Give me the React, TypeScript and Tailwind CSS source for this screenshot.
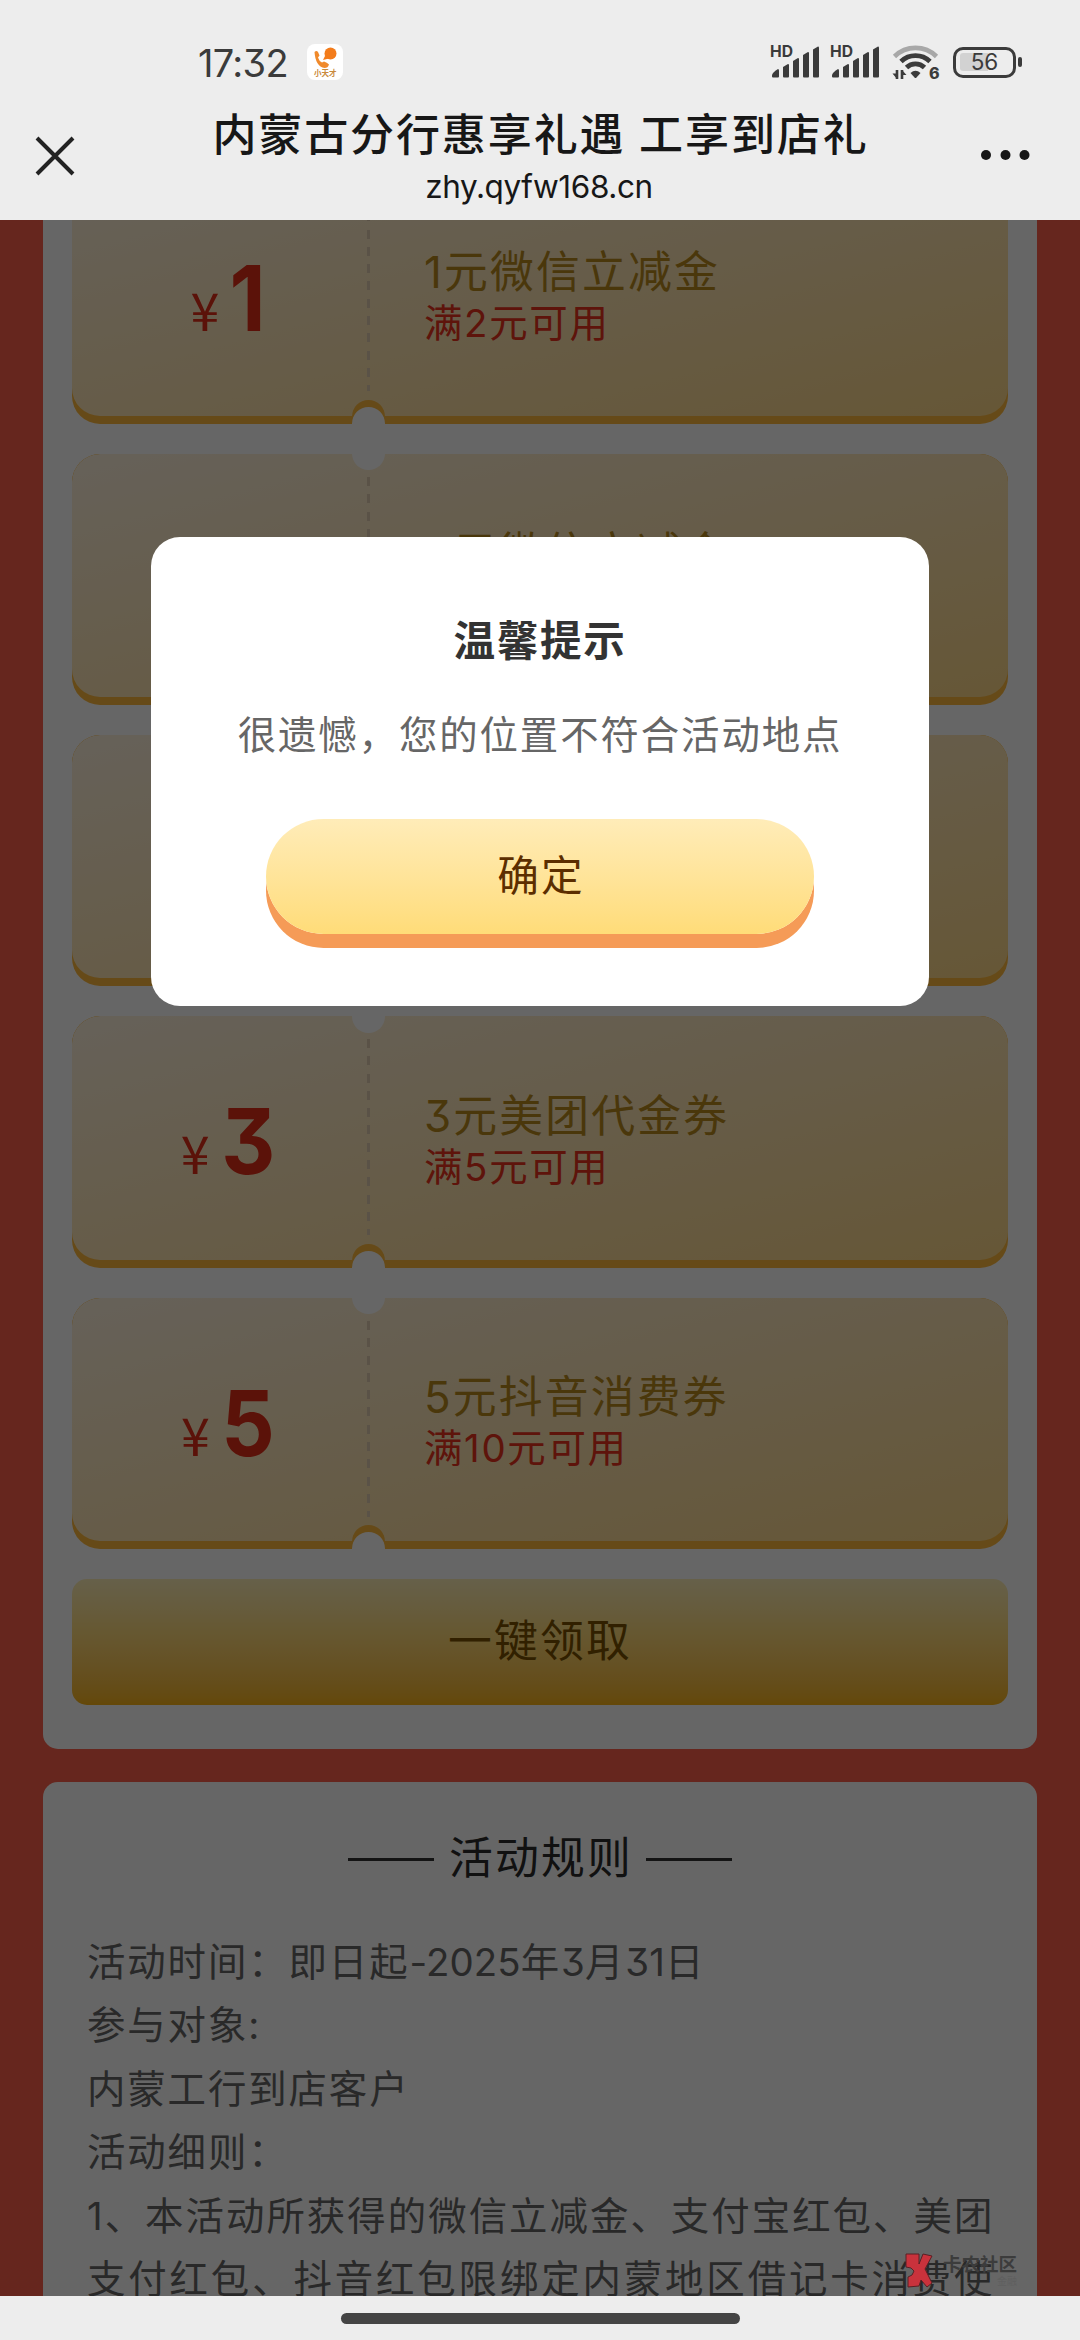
interface Coupon {
  amount: string;
  title: string;
  condition: string;
}

const coupons: Coupon[] = [
  { amount: "1", title: "1元微信立减金", condition: "满2元可用" },
  { amount: "2", title: "2元微信立减金", condition: "满4元可用" },
  { amount: "2", title: "2元支付宝红包", condition: "满4元可用" },
  { amount: "3", title: "3元美团代金券", condition: "满5元可用" },
  { amount: "5", title: "5元抖音消费券", condition: "满10元可用" },
];

function SignalIcon() {
  return (
    <svg className="overflow-visible" width="50" height="34" viewBox="0 0 50 34" fill="#3b3b3b">
      <text x="0" y="12" fontSize="15.5" fontWeight="700" textLength="23" lengthAdjust="spacingAndGlyphs">
        HD
      </text>
      <path d="M2 30.500q0-3 6-6.500q1 0 1 1.500v6q0 1-1 1h-5q-1 0-1-1z" />
      <path d="M13 22l5-3q1 0 1 1v11.500q0 1-1 1h-4q-1 0-1-1z" />
      <path d="M23 16l5-3q1 0 1 1v17.500q0 1-1 1h-4q-1 0-1-1z" />
      <path d="M33 10l5-3q1 0 1 1v23.500q0 1-1 1h-4q-1 0-1-1z" />
      <path d="M43 4.500l5-3q1 0 1 1v29q0 1-1 1h-4q-1 0-1-1z" />
    </svg>
  );
}

function WifiIcon() {
  return (
    <svg className="overflow-visible" width="48" height="36" viewBox="0 0 48 36" fill="none">
      <path d="M2.500 12.500a30 30 0 0 1 42 0" stroke="#a8a8a8" strokeWidth="4.600" />
      <path d="M9 17.500a21 21 0 0 1 29 0" stroke="#3b3b3b" strokeWidth="4.800" />
      <path d="M14.500 23.500a13 13 0 0 1 18 0" stroke="#3b3b3b" strokeWidth="4.800" />
      <path d="M18.500 29q5-4.500 10 0l-4 4.500q-1 1-2 0z" fill="#3b3b3b" />
      <path d="M5 26v9M10 35v-9" stroke="#3b3b3b" strokeWidth="2.600" />
      <path d="M.5 29.500L5 35v-5.500zM14.500 31L10 26v5z" fill="#3b3b3b" />
      <text x="37" y="35" fontSize="16" fontWeight="800" fill="#3b3b3b">
        6
      </text>
    </svg>
  );
}

function Battery() {
  return (
    <div className="flex items-center gap-[2px]">
      <div className="relative flex h-[31px] w-[63px] items-center justify-center rounded-[10px] border-[3.500px] border-[#3b3b3b]">
        <div className="absolute left-[4px] h-[18px] w-[28px] rounded-l-[3px] bg-[#d2d2d2]" />
        <span className="relative text-[22.500px] leading-none text-[#3b3b3b]">56</span>
      </div>
      <div className="h-[10px] w-[4px] rounded-[2px] bg-[#3b3b3b]" />
    </div>
  );
}

function AppBadge() {
  return (
    <svg className="ml-[19px]" width="36" height="36" viewBox="0 0 36 36">
      <rect width="36" height="36" rx="8" fill="#fff" />
      <path
        d="M7.500 8q2-2 3.500 0l1.500 3.500-1.500 2q1 3.500 4 5l2-1q3 1 5 3-1 3.500-4.500 3.500-9-1.500-10-16z"
        fill="#f08a2c"
      />
      <circle cx="23.500" cy="9.500" r="6" fill="#f37c1b" />
      <path d="M18.500 11l-2.500 5 6-1.500z" fill="#f37c1b" />
      <text x="7" y="32" fontSize="7.500" fontWeight="700" fill="#c98a3c">
        小天才
      </text>
    </svg>
  );
}

function StatusBar() {
  return (
    <div className="flex h-[80px] items-end pl-[198px] pr-[58px]">
      <span className="text-[38px] leading-[34px] tracking-[-0.700px] text-[#3b3b3b]">17:32</span>
      <AppBadge />
      <div className="ml-auto flex items-center">
        <SignalIcon />
        <div className="w-[10px]" />
        <SignalIcon />
        <div className="w-[12px]" />
        <WifiIcon />
        <div className="w-[13px]" />
        <Battery />
      </div>
    </div>
  );
}

function TitleBar() {
  return (
    <div className="flex h-[140px] items-start justify-between pl-[35px] pr-[49px] text-[#171717]">
      <svg className="mt-[56px]" width="40" height="40" viewBox="0 0 40 40" stroke="#222" strokeWidth="4">
        <path d="M2 2l36 36M38 2L2 38" />
      </svg>
      <div className="ml-[25px] mt-[29px] flex flex-col items-center">
        <h1 className="whitespace-nowrap text-[44px] font-medium leading-[52px] tracking-[1.900px]">
          内蒙古分行惠享礼遇 工享到店礼
        </h1>
        <p className="-ml-[3px] mt-[4px] text-[31.500px] leading-[44px] tracking-[-0.400px]">zhy.qyfw168.cn</p>
      </div>
      <svg className="mt-[70px]" width="50" height="10" viewBox="0 0 50 10" fill="#171717">
        <circle cx="5" cy="5" r="5" />
        <circle cx="24.500" cy="5" r="5" />
        <circle cx="43.500" cy="5" r="5" />
      </svg>
    </div>
  );
}

function CouponCard({ amount, title, condition }: Coupon) {
  return (
    <div className="relative h-[251.300px] overflow-hidden rounded-[28px] bg-[#ffb93c]">
      <div className="flex h-[243.500px] items-center rounded-[28px] bg-linear-to-br from-[#fff3df] to-[#ffd988] pt-[8px]">
        <div className="flex w-[314px] items-baseline justify-center gap-[9px] text-[#e42e18]">
          <span className="font-['Noto_Sans_CJK_SC'] text-[52px] leading-none">¥</span>
          <span className="inline-block scale-x-[0.920] text-[91px] font-bold leading-none">{amount}</span>
        </div>
        <div className="pl-[38px]">
          <p className="text-[43.800px] leading-[51px] tracking-[2.200px] text-[#b98a1c]">{title}</p>
          <p className="text-[38.400px] leading-[51px] tracking-[1.700px] text-[#ea321c]">{condition}</p>
        </div>
      </div>
      {/* perforation and punched notches */}
      <div className="absolute left-[294.500px] top-[23px] h-[196px] w-[3px] bg-[repeating-linear-gradient(to_bottom,#e2cdb2_0_9px,transparent_9px_17.300px)]" />
      <div className="absolute -top-[16.500px] left-[279.500px] size-[33px] rounded-full bg-white" />
      <div className="absolute -bottom-[9px] left-[279.500px] size-[33px] rounded-full bg-[#ffb93c]" />
      <div className="absolute -bottom-[16.500px] left-[279.500px] size-[33px] rounded-full bg-white" />
    </div>
  );
}

function Rules() {
  return (
    <section className="mt-[33px] h-[600px] rounded-[15px] bg-white px-[44px] pt-[50px]">
      <div className="flex items-center justify-center gap-[15px]">
        <div className="h-[3px] w-[86px] bg-[#333]" />
        <h2 className="-mr-[2px] text-[43.800px] leading-[54px] tracking-[2.200px] text-[#2b2b2b]">活动规则</h2>
        <div className="h-[3px] w-[86px] bg-[#333]" />
      </div>
      <div className="mt-[45px] whitespace-nowrap text-[38.400px] leading-[63.400px] tracking-[1.920px] text-[#666]">
        <p>
          活动时间：即日起<span className="tracking-[0.100px]">-2025</span>年
          <span className="tracking-[0.100px]">3</span>月<span className="tracking-[0.100px]">31</span>日
        </p>
        <p>参与对象:</p>
        <p>内蒙工行到店客户</p>
        <p>活动细则：</p>
        <p className="tracking-[2.050px]">1、本活动所获得的微信立减金、支付宝红包、美团</p>
        <p className="tracking-[2.900px]">支付红包、抖音红包限绑定内蒙地区借记卡消费使</p>
      </div>
    </section>
  );
}

function Watermark() {
  return (
    <div className="absolute bottom-[8px] left-[905px] flex items-start gap-[10px]">
      <svg width="28" height="35" viewBox="0 0 28 35" fill="#c9323c" stroke="#5a2025" strokeWidth="1">
        <path d="M1 1h13v10l4-10 9 2-7 13 7 14-5 4-6-7-2 6-11 1V24q5-1 6-6-2-4-8-4z" />
      </svg>
      <div className="flex flex-col items-end">
        <span className="text-[18.500px] font-bold leading-[22px] text-[#3c3c3c]">卡农社区</span>
        <span className="text-[10px] leading-[12px] text-[#5f5f5f]">金融</span>
      </div>
    </div>
  );
}

function NoticeDialog() {
  return (
    <div className="mx-auto mt-[317px] flex h-[469px] w-[778px] flex-col items-center rounded-[29px] bg-white">
      <h3 className="mt-[78px] text-[41.600px] font-bold leading-[52px] tracking-[1.700px] text-[#333]">温馨提示</h3>
      <p className="mt-[41px] text-[38.400px] leading-[54px] tracking-wider text-[#666]">
        很遗憾，您的位置不符合活动地点
      </p>
      <button className="mt-[57px] h-[115px] w-[548px] rounded-full bg-linear-to-b from-[#ffecb8] to-[#ffdc78] pl-[2px] text-[41.600px] tracking-wider text-[#5c2e00] shadow-[0_14px_0_#f59b57]">
        确定
      </button>
    </div>
  );
}

export default function App() {
  return (
    <div className="flex h-[2340px] w-[1080px] flex-col overflow-hidden bg-[#ededed] font-[Inter,'Noto_Sans_CJK_SC',sans-serif] [font-feature-settings:'cv09']">
      <header className="h-[220px] shrink-0">
        <StatusBar />
        <TitleBar />
      </header>
      <main className="relative h-[2076px] shrink-0 overflow-hidden bg-[#ff604b] px-[43px]">
        <section className="-mt-[77.700px] flex h-[1606.700px] flex-col gap-[30px] rounded-[15px] bg-white px-[29px] pt-[30px]">
          {coupons.map((coupon, i) => (
            <CouponCard key={i} {...coupon} />
          ))}
          <button className="h-[126px] rounded-[15px] bg-linear-to-b from-[#fff0b8] via-[#ffdc7c] via-42% to-[#f9b414] text-[43.800px] tracking-[2.200px] text-[#7a5200]">
            一键领取
          </button>
        </section>
        <Rules />
        <div className="absolute inset-0 bg-black/60">
          <NoticeDialog />
        </div>
        <Watermark />
      </main>
      <footer className="flex h-[44px] justify-center pt-[17px]">
        <div className="h-[11px] w-[399px] rounded-full bg-[#444]" />
      </footer>
    </div>
  );
}
